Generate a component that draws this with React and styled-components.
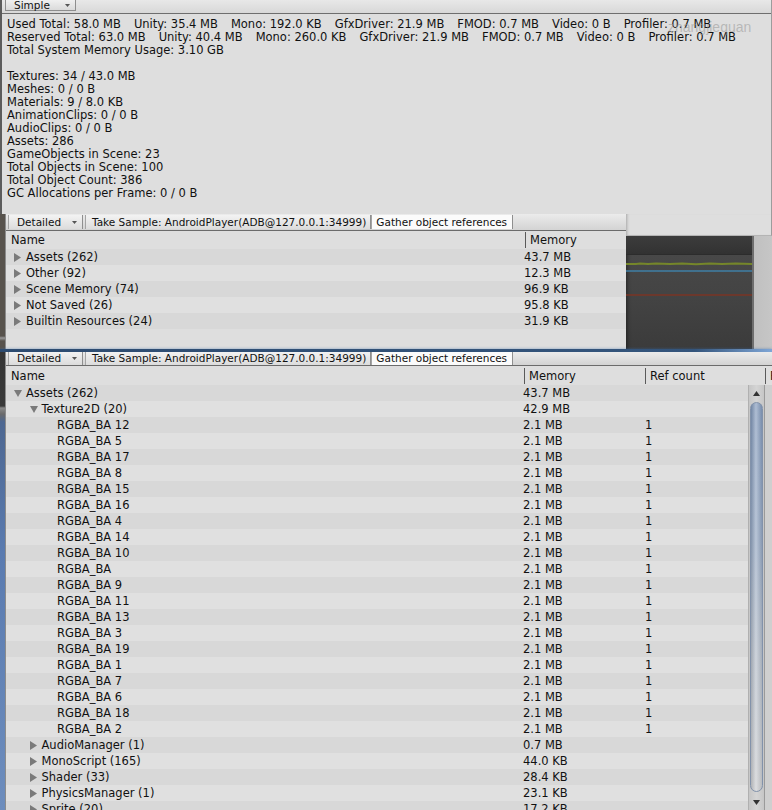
import React from "react";
import styled, { createGlobalStyle } from "styled-components";

const GlobalStyle = createGlobalStyle`
  html, body {
    margin: 0;
    padding: 0;
    background: #2b2b2b;
  }
  body {
    font-family: "DejaVu Sans", Verdana, sans-serif;
    font-size: 11.5px;
    color: #111;
  }
`;

const usedStats = [
  "Used Total: 58.0 MB",
  "Unity: 35.4 MB",
  "Mono: 192.0 KB",
  "GfxDriver: 21.9 MB",
  "FMOD: 0.7 MB",
  "Video: 0 B",
  "Profiler: 0.7 MB",
];

const reservedStats = [
  "Reserved Total: 63.0 MB",
  "Unity: 40.4 MB",
  "Mono: 260.0 KB",
  "GfxDriver: 21.9 MB",
  "FMOD: 0.7 MB",
  "Video: 0 B",
  "Profiler: 0.7 MB",
];

const objectStats = [
  "Textures: 34 / 43.0 MB",
  "Meshes: 0 / 0 B",
  "Materials: 9 / 8.0 KB",
  "AnimationClips: 0 / 0 B",
  "AudioClips: 0 / 0 B",
  "Assets: 286",
  "GameObjects in Scene: 23",
  "Total Objects in Scene: 100",
  "Total Object Count: 386",
  "GC Allocations per Frame: 0 / 0 B",
];

const summaryRows = [
  { depth: 0, open: false, name: "Assets (262)", memory: "43.7 MB" },
  { depth: 0, open: false, name: "Other (92)", memory: "12.3 MB" },
  { depth: 0, open: false, name: "Scene Memory (74)", memory: "96.9 KB" },
  { depth: 0, open: false, name: "Not Saved (26)", memory: "95.8 KB" },
  { depth: 0, open: false, name: "Builtin Resources (24)", memory: "31.9 KB" },
];

const textureIds = ["12", "5", "17", "8", "15", "16", "4", "14", "10", "", "9", "11", "13", "3", "19", "1", "7", "6", "18", "2"];

const detailRows = [
  { depth: 0, open: true, name: "Assets (262)", memory: "43.7 MB" },
  { depth: 1, open: true, name: "Texture2D (20)", memory: "42.9 MB" },
  ...textureIds.map((id) => ({
    depth: 2,
    name: id ? `RGBA_BA ${id}` : "RGBA_BA",
    memory: "2.1 MB",
    refs: "1",
  })),
  { depth: 1, open: false, name: "AudioManager (1)", memory: "0.7 MB" },
  { depth: 1, open: false, name: "MonoScript (165)", memory: "44.0 KB" },
  { depth: 1, open: false, name: "Shader (33)", memory: "28.4 KB" },
  { depth: 1, open: false, name: "PhysicsManager (1)", memory: "23.1 KB" },
  { depth: 1, open: false, name: "Sprite (20)", memory: "17.2 KB" },
];

const Caret = () => (
  <svg width="5" height="3" viewBox="0 0 5 3">
    <path d="M0 0h5L2.5 3z" fill="#555" />
  </svg>
);

const Expander = ({ open }) => (
  <ArrowBox>
    {open === true && (
      <svg width="8" height="7" viewBox="0 0 8 7">
        <path d="M0 0h8L4 7z" fill="#7a7a7a" />
      </svg>
    )}
    {open === false && (
      <svg width="7" height="9" viewBox="0 0 7 9">
        <path d="M0 0l7 4.5L0 9z" fill="#7a7a7a" />
      </svg>
    )}
  </ArrowBox>
);

const SampleToolbar = ({ clipped }) => (
  <Toolbar $clipped={clipped}>
    <DropdownButton>
      Detailed
      <Caret />
    </DropdownButton>
    <ToolButton>Take Sample: AndroidPlayer(ADB@127.0.0.1:34999)</ToolButton>
    <ToolButton $active>Gather object references</ToolButton>
  </Toolbar>
);

const TreeRow = ({ row, index, columns, withRefs }) => (
  <Row $odd={index % 2 === 1} $columns={columns}>
    <NameCell $depth={row.depth}>
      <Expander open={row.open} />
      {row.name}
    </NameCell>
    <ValueCell>{row.memory}</ValueCell>
    {withRefs && <ValueCell>{row.refs}</ValueCell>}
  </Row>
);

const MemoryGraph = () => (
  <Graph>
    <GraphHeader />
    <svg width="126" height="95" viewBox="0 0 126 95">
      <path
        d="M0 9 L10 9 L14 8.5 L22 9 L30 8.6 L44 9 L56 8.5 L70 9.2 L84 8.6 L96 9 L110 8.5 L126 9"
        stroke="#75862a"
        strokeWidth="2"
        fill="none"
      />
      <path d="M0 16 H126" stroke="#3f7fa6" strokeWidth="1.5" />
      <path d="M0 40 H126" stroke="#7a3424" strokeWidth="1.5" />
    </svg>
  </Graph>
);

const App = () => {
  return (
    <>
      <GlobalStyle />
      <Screen>
        <SimplePanel>
          <TopToolbar>
            <SimpleButton>
              Simple
              <Caret />
            </SimpleButton>
          </TopToolbar>
          <Stats>
            <StatLine>
              {usedStats.map((s) => (
                <span key={s}>{s}</span>
              ))}
            </StatLine>
            <StatLine>
              {reservedStats.map((s) => (
                <span key={s}>{s}</span>
              ))}
            </StatLine>
            <StatLine>Total System Memory Usage: 3.10 GB</StatLine>
            <StatLine />
            {objectStats.map((s) => (
              <StatLine key={s}>{s}</StatLine>
            ))}
          </Stats>
          <Watermark>zhangjiequan</Watermark>
        </SimplePanel>

        <MiddleBand>
          <EdgeStrip $variant="dark" />
          <SummaryPanel>
            <SampleToolbar />
            <Header $columns="519px 1fr" $height={18}>
              <HeaderCell $first>Name</HeaderCell>
              <HeaderCell>Memory</HeaderCell>
            </Header>
            {summaryRows.map((row, i) => (
              <TreeRow key={row.name} row={row} index={i} columns="518px 1fr" />
            ))}
          </SummaryPanel>
          <SideColumn>
            <PanelTail />
            <GraphRow>
              <MemoryGraph />
              <Gutter />
            </GraphRow>
          </SideColumn>
        </MiddleBand>

        <Splitter />

        <BottomBand>
          <EdgeStrip $variant="sky" />
          <DetailPanel>
            <SampleToolbar clipped />
            <Header $columns="518px 121px 120px 1fr" $height={19}>
              <HeaderCell $first>Name</HeaderCell>
              <HeaderCell>Memory</HeaderCell>
              <HeaderCell>Ref count</HeaderCell>
              <HeaderCell>R</HeaderCell>
            </Header>
            <Body>
              <RowList>
                {detailRows.map((row, i) => (
                  <TreeRow key={row.name + i} row={row} index={i} columns="517px 122px 1fr" withRefs />
                ))}
              </RowList>
              <Scrollbar>
                <ScrollArrow>
                  <svg width="7" height="5" viewBox="0 0 7 5">
                    <path d="M0 5h7L3.5 0z" fill="#333" />
                  </svg>
                </ScrollArrow>
                <ScrollThumb />
                <ScrollArrow>
                  <svg width="7" height="5" viewBox="0 0 7 5">
                    <path d="M0 0h7L3.5 5z" fill="#333" />
                  </svg>
                </ScrollArrow>
              </Scrollbar>
              <RightMargin />
            </Body>
          </DetailPanel>
        </BottomBand>
      </Screen>
    </>
  );
};

export default App;

const Screen = styled.div`
  width: 772px;
  height: 810px;
  overflow: hidden;
  display: flex;
  flex-direction: column;
  background: #2b2b2b;
`;

const SimplePanel = styled.div`
  position: relative;
  flex: 0 0 214px;
  box-sizing: border-box;
  background: #dedede;
  border-left: 2px solid #5c5c5c;
  border-right: 1px solid #9c9c9c;
  overflow: hidden;
`;

const TopToolbar = styled.div`
  height: 14px;
  box-sizing: border-box;
  display: flex;
  align-items: flex-start;
  padding-left: 3px;
  background: linear-gradient(#e8e8e8, #d8d8d8);
  border-bottom: 1px solid #6e6e6e;
`;

const SimpleButton = styled.div`
  width: 71px;
  height: 11px;
  box-sizing: border-box;
  display: flex;
  align-items: center;
  justify-content: space-between;
  padding: 0 5px 0 8px;
  line-height: 9px;
  background: linear-gradient(#f0f0f0, #dadada);
  border: 1px solid #8e8e8e;
  border-top: none;
  font-size: 10.5px;
`;

const Stats = styled.div`
  padding: 4px 0 0 5px;
  line-height: 13px;
`;

const StatLine = styled.div`
  height: 13px;
  display: flex;
  gap: 13px;
  white-space: nowrap;
`;

const Watermark = styled.div`
  position: absolute;
  left: 666px;
  top: 19px;
  font-family: "Liberation Sans", Arial, sans-serif;
  font-size: 14px;
  color: rgba(150, 150, 150, 0.55);
  pointer-events: none;
`;

const MiddleBand = styled.div`
  flex: 0 0 135px;
  display: flex;
  overflow: hidden;
`;

const EdgeStrip = styled.div`
  flex: 0 0 5px;
  background: ${(p) =>
    p.$variant === "sky"
      ? "linear-gradient(#353535 0px, #3a3a3a 54px, #8a8a8a 56px, #6a6a6a 62px, #4d6791 70px, #5a7bb0 200px, #6d8dbd 458px)"
      : "linear-gradient(#58534d 0px, #58534d 122px, #9a9a9a 124px, #58534d 127px, #58534d 135px)"};
`;

const SummaryPanel = styled.div`
  flex: 0 0 621px;
  box-sizing: border-box;
  display: flex;
  flex-direction: column;
  background: #dedede;
  border-left: 1px solid #8c8c8c;
  overflow: hidden;
`;

const Toolbar = styled.div`
  flex: 0 0 ${(p) => (p.$clipped ? 14 : 17)}px;
  box-sizing: border-box;
  display: flex;
  align-items: ${(p) => (p.$clipped ? "flex-end" : "flex-start")};
  padding: ${(p) => (p.$clipped ? "0 0 0 2px" : "1px 0 0 2px")};
  background: linear-gradient(#ebebeb, #d3d3d3);
  border-bottom: 1px solid #6b6b6b;
  overflow: hidden;
  font-size: 10.5px;
`;

const ToolButton = styled.div`
  height: 14px;
  box-sizing: border-box;
  display: flex;
  align-items: center;
  padding: 0 ${(p) => (p.$active ? "5px 0 4px" : "4px 0 6px")};
  line-height: 14px;
  white-space: nowrap;
  background: ${(p) => (p.$active ? "#fbfbfb" : "linear-gradient(#f3f3f3, #dcdcdc)")};
  border-left: 1px solid #a4a4a4;
  border-right: 1px solid #8f8f8f;
`;

const DropdownButton = styled(ToolButton)`
  flex: 0 0 75px;
  justify-content: space-between;
  padding: 0 5px 0 8px;
  margin-right: 2px;

  svg {
    flex: none;
  }
`;

const Header = styled.div`
  flex: 0 0 ${(p) => p.$height}px;
  display: grid;
  grid-template-columns: ${(p) => p.$columns};
  align-items: center;
  background: #dedede;
`;

const HeaderCell = styled.div`
  height: 16px;
  line-height: 16px;
  box-sizing: border-box;
  padding-left: ${(p) => (p.$first ? 5 : 4)}px;
  border-left: ${(p) => (p.$first ? "none" : "1px solid #5a5a5a")};
  white-space: nowrap;
  overflow: hidden;
`;

const Row = styled.div`
  height: 16px;
  flex: 0 0 16px;
  display: grid;
  grid-template-columns: ${(p) => p.$columns};
  align-items: center;
  background: ${(p) => (p.$odd ? "#e0e0e0" : "#d8d8d8")};
  white-space: nowrap;
`;

const NameCell = styled.div`
  display: flex;
  align-items: center;
  padding-left: ${(p) => 8 + p.$depth * 15.5}px;
  overflow: hidden;
`;

const ArrowBox = styled.span`
  flex: 0 0 12px;
  display: flex;
  align-items: center;
`;

const ValueCell = styled.div`
  overflow: hidden;
`;

const SideColumn = styled.div`
  flex: 1;
  display: flex;
  flex-direction: column;
`;

const PanelTail = styled.div`
  flex: 0 0 22px;
  box-sizing: border-box;
  background: #dedede;
  border-right: 1px solid #9c9c9c;
  border-bottom: 1px solid #b4b4b4;
  box-shadow: inset 3px 0 3px -2px rgba(0, 0, 0, 0.25);
`;

const GraphRow = styled.div`
  flex: 1;
  display: flex;
`;

const Graph = styled.div`
  flex: 0 0 126px;
  display: flex;
  flex-direction: column;
  background: linear-gradient(#4a4a4a, #444 50%, #3b3b3b);
  box-shadow: inset 4px 0 4px -3px rgba(0, 0, 0, 0.5);
`;

const GraphHeader = styled.div`
  flex: 0 0 18px;
  background: linear-gradient(#3c3c3c, #323232);
  border-bottom: 1px solid #2c2c2c;
`;

const Gutter = styled.div`
  flex: 1;
  background: linear-gradient(90deg, #c0c0c0, #c6c6c6);
  border-left: 2px solid #6e6e6e;
`;

const Splitter = styled.div`
  flex: 0 0 3px;
  background: linear-gradient(90deg, #2d4b70 0%, #34557c 90%, #7fa6d6 100%);
  box-shadow: 0 0 3px rgba(60, 110, 170, 0.6);
`;

const BottomBand = styled.div`
  flex: 1;
  display: flex;
  min-height: 0;
`;

const DetailPanel = styled.div`
  flex: 1;
  display: flex;
  flex-direction: column;
  background: #dedede;
  border-left: 1px solid #8c8c8c;
  overflow: hidden;
`;

const Body = styled.div`
  flex: 1;
  display: flex;
  min-height: 0;
`;

const RowList = styled.div`
  flex: 0 0 742px;
  display: flex;
  flex-direction: column;
  overflow: hidden;
`;

const Scrollbar = styled.div`
  flex: 0 0 16px;
  display: flex;
  flex-direction: column;
  background: linear-gradient(90deg, #c6c6c6, #d4d4d4 50%, #c6c6c6);
  border-left: 1px solid #b0b0b0;
  box-sizing: border-box;
`;

const ScrollArrow = styled.div`
  flex: 0 0 16px;
  display: flex;
  align-items: center;
  justify-content: center;
`;

const ScrollThumb = styled.div`
  flex: 1;
  margin: 1px 1px 2px 1px;
  border-radius: 7px;
  border: 1px solid #8292aa;
  background: linear-gradient(90deg, rgba(0, 0, 0, 0.12), rgba(255, 255, 255, 0.35) 45%, rgba(0, 0, 0, 0.08)),
    linear-gradient(#8299bb 0%, #94a7c2 35%, #b4bdc9 65%, #cacccf 100%);
`;

const RightMargin = styled.div`
  flex: 1;
  background: #cfcfcf;
  border-left: 1px solid #9a9a9a;
`;
